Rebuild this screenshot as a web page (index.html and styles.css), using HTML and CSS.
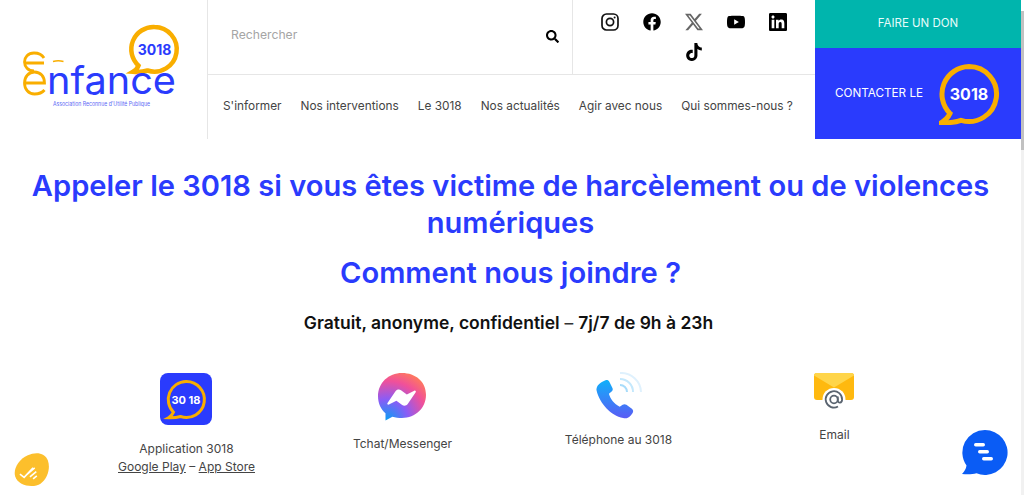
FILE: index.html
```html
<!DOCTYPE html>
<html lang="fr">
<head>
  <title>Appeler le 3018</title>
  <meta charset="UTF-8">
  <link rel="stylesheet" href="styles.css">
</head>
<body>
  <header class="site-header">
    <a class="logo" href="#">
      <svg width="207" height="139" viewBox="0 0 207 139">
        <path d="M154.500 27a22.300 22.300 0 1 1-7 43.500c-4 1.300-9 1.800-14.500 1.300 2.500-1.400 4.500-3.600 5.500-6.100A22.300 22.300 0 0 1 154.500 27z" fill="none" stroke="#f9ae00" stroke-width="4.500"/>
        <text class="logo-num" x="154.500" y="55" text-anchor="middle">3018</text>
        <path d="M44 58c-2-3.500-6-5-10-5-6 0-9.500 4.500-9.500 9S28 71 34 71M24.500 63H44" fill="none" stroke="#f9ae00" stroke-width="2.800"/>
        <path d="M44.500 90c-2.500 3-6 4-10 4-6 0-10-5-10-11s4-11 10-11 10 4.500 10 11H24.500" fill="none" stroke="#f9ae00" stroke-width="2.800"/>
        <path d="M53 61.500c3.500-1 7-1 10.500 0" fill="none" stroke="#f9ae00" stroke-width="1.500"/>
        <text class="logo-word" x="47" y="93.500" textLength="129" lengthAdjust="spacingAndGlyphs">nfance</text>
        <text class="logo-small" x="53" y="105.500" textLength="97" lengthAdjust="spacingAndGlyphs">Association Reconnue d'Utilité Publique</text>
      </svg>
    </a>

    <div class="header-middle">
      <div class="top-row">
        <div class="search">
          <span class="search-label">Rechercher</span>
          <svg class="search-icon" width="13" height="13" viewBox="0 0 512 512"><path d="M505 442.700L405.300 343c-4.500-4.500-10.600-7-17-7H372c27.600-35.300 44-79.700 44-128C416 93.100 322.900 0 208 0S0 93.100 0 208s93.100 208 208 208c48.300 0 92.700-16.400 128-44v16.300c0 6.400 2.500 12.500 7 17l99.700 99.700c9.400 9.400 24.600 9.400 33.900 0l28.300-28.300c9.400-9.400 9.400-24.600.1-34zM208 336c-70.700 0-128-57.200-128-128 0-70.700 57.200-128 128-128 70.700 0 128 57.200 128 128 0 70.700-57.200 128-128 128z"/></svg>
        </div>
        <div class="socials">
          <svg width="18" height="18" viewBox="0 0 18 18"><rect x="1" y="1" width="16" height="16" rx="4.500" fill="none" stroke="#111" stroke-width="1.700"/><circle cx="9" cy="9" r="3.600" fill="none" stroke="#111" stroke-width="1.700"/><circle cx="13.600" cy="4.400" r="1" fill="#111"/></svg>
          <svg width="18" height="18" viewBox="0 0 512 512"><path d="M504 256C504 119 393 8 256 8S8 119 8 256c0 123.780 90.690 226.380 209.250 245V327.690h-63V256h63v-54.640c0-62.150 37-96.480 93.670-96.480 27.140 0 55.520 4.840 55.520 4.840v61h-31.280c-30.800 0-40.410 19.120-40.410 38.730V256h68.780l-11 71.690h-57.780V501C413.310 482.380 504 379.780 504 256z"/></svg>
          <svg width="18" height="18" viewBox="0 0 24 24"><path d="M18.901 1.153h3.680l-8.040 9.190L24 22.846h-7.406l-5.800-7.584-6.638 7.584H.474l8.600-9.830L0 1.154h7.594l5.243 6.932ZM17.610 20.644h2.039L6.486 3.240H4.298Z" fill="#666"/></svg>
          <svg width="18" height="18" viewBox="0 0 24 24"><path d="M23.498 6.186a3.016 3.016 0 0 0-2.122-2.136C19.505 3.545 12 3.545 12 3.545s-7.505 0-9.377.505A3.017 3.017 0 0 0 .502 6.186C0 8.070 0 12 0 12s0 3.930.502 5.814a3.016 3.016 0 0 0 2.122 2.136c1.871.505 9.376.505 9.376.505s7.505 0 9.377-.505a3.015 3.015 0 0 0 2.122-2.136C24 15.930 24 12 24 12s0-3.930-.502-5.814zM9.545 15.568V8.432L15.818 12l-6.273 3.568z"/></svg>
          <svg width="18" height="18" viewBox="0 0 24 24"><path d="M20.447 20.452h-3.554v-5.569c0-1.328-.027-3.037-1.852-3.037-1.853 0-2.136 1.445-2.136 2.939v5.667H9.351V9h3.414v1.561h.046c.477-.9 1.637-1.850 3.370-1.850 3.601 0 4.267 2.370 4.267 5.455v6.286zM5.337 7.433c-1.144 0-2.063-.926-2.063-2.065 0-1.138.92-2.063 2.063-2.063 1.140 0 2.064.925 2.064 2.063 0 1.139-.925 2.065-2.064 2.065zm1.782 13.019H3.555V9h3.564v11.452zM22.225 0H1.771C.792 0 0 .774 0 1.729v20.542C0 23.227.792 24 1.771 24h20.451C23.200 24 24 23.227 24 22.271V1.729C24 .774 23.200 0 22.222 0h.003z"/></svg>
          <svg width="18" height="18" viewBox="0 0 24 24"><path d="M12.525.02c1.310-.02 2.610-.01 3.910-.02.08 1.530.63 3.090 1.750 4.170 1.120 1.110 2.700 1.620 4.240 1.790v4.030c-1.440-.05-2.890-.35-4.200-.97-.57-.26-1.100-.59-1.620-.93-.01 2.920.01 5.840-.02 8.750-.08 1.400-.54 2.790-1.350 3.940-1.310 1.920-3.580 3.170-5.910 3.210-1.430.08-2.860-.31-4.080-1.030-2.020-1.190-3.440-3.370-3.650-5.710-.02-.5-.03-1-.01-1.490.18-1.900 1.120-3.720 2.580-4.960 1.660-1.440 3.980-2.130 6.150-1.720.02 1.480-.04 2.960-.04 4.440-.99-.32-2.150-.23-3.020.37-.63.41-1.110 1.040-1.360 1.750-.21.51-.15 1.070-.14 1.610.24 1.640 1.820 3.020 3.500 2.870 1.120-.01 2.190-.66 2.770-1.610.19-.33.4-.67.41-1.060.1-1.790.06-3.570.07-5.360.01-4.030-.01-8.050.02-12.070z"/></svg>
        </div>
      </div>
      <nav class="main-nav">
        <a href="#">S'informer</a>
        <a href="#">Nos interventions</a>
        <a href="#">Le 3018</a>
        <a href="#">Nos actualités</a>
        <a href="#">Agir avec nous</a>
        <a href="#">Qui sommes-nous ?</a>
      </nav>
    </div>

    <div class="header-cta">
      <a class="cta-don" href="#">FAIRE UN DON</a>
      <a class="cta-contact" href="#">
        <span class="cta-text">CONTACTER LE</span>
        <svg width="62" height="62" viewBox="0 0 62 62">
          <path d="M30 3.500a27.500 27.500 0 1 1-8 53.800c-5 1.800-13 2.700-20 2.500 3.500-2 7-5 9-9.400A27.500 27.500 0 0 1 30 3.500z" fill="none" stroke="#f9ae00" stroke-width="5"/>
          <text class="bubble-num" x="30" y="37" text-anchor="middle">3018</text>
        </svg>
      </a>
    </div>
  </header>

  <main class="content">
    <h1>Appeler le 3018 si vous êtes victime de harcèlement ou de violences numériques</h1>
    <h2>Comment nous joindre ?</h2>
    <p class="hours"><strong>Gratuit, anonyme, confidentiel</strong> – <strong>7j/7 de 9h à 23h</strong></p>

    <div class="channels">
      <div class="channel channel-app">
        <svg width="52" height="52" viewBox="0 0 52 52">
          <rect width="52" height="52" rx="8" fill="#2a3bfd"/>
          <path d="M26 8.500a18 18 0 1 1-5.500 35c-3.500 1-7 1.400-12 1.200 2.300-1.300 4-3.200 5-5.500A18 18 0 0 1 26 8.500z" fill="none" stroke="#f9ae00" stroke-width="3"/>
          <text class="app-num" x="26" y="30.500" text-anchor="middle">30 18</text>
        </svg>
        <p class="channel-label">Application 3018<br><a href="#">Google Play</a> – <a href="#">App Store</a></p>
      </div>
      <div class="channel channel-messenger">
        <svg width="50" height="50" viewBox="0 0 50 50">
          <defs>
            <radialGradient id="msg" cx="0.190" cy="0.990" r="1.100">
              <stop offset="0" stop-color="#0a9df5"/>
              <stop offset="0.400" stop-color="#8a5cf6"/>
              <stop offset="0.750" stop-color="#f0509a"/>
              <stop offset="1" stop-color="#ff7a5c"/>
            </radialGradient>
          </defs>
          <path d="M25 1C11.500 1 1 10.900 1 24.200c0 7 2.900 13 7.500 17.100v7.200l6.900-3.800c3 .8 6.200 1.300 9.600 1.300 13.500 0 24-9.900 24-23.200S38.500 1 25 1z" fill="url(#msg)"/>
          <path d="M10.500 31l8-11.800c1.200-1.800 3.700-2.300 5.500-1l5.800 4.400 7.500-3.900c1-.5 2 .6 1.400 1.600l-8 11.800c-1.200 1.800-3.700 2.300-5.500 1l-5.800-4.400-7.500 3.900c-1 .5-2-.6-1.400-1.600z" fill="#fff"/>
        </svg>
        <p class="channel-label">Tchat/Messenger</p>
      </div>
      <div class="channel channel-phone">
        <svg width="50" height="50" viewBox="0 0 50 50">
          <defs>
            <linearGradient id="tel" x1="0" y1="0" x2="0" y2="1">
              <stop offset="0" stop-color="#10b0fa"/>
              <stop offset="1" stop-color="#5a5cf5"/>
            </linearGradient>
          </defs>
          <path transform="translate(-1 2.500) scale(1.040)" d="M9 7l3-1.500c1.500-.7 3 0 3.700 1.400l3 6c.6 1.300.3 2.600-.8 3.500l-2.600 2.200c1.500 5.400 5 9.700 10.400 12.500l2.800-2c1.100-.8 2.500-.8 3.600 0l5.300 3.800c1.300 1 1.600 2.700.7 4l-1.600 2.200c-1.700 2.400-4.600 3.500-7.500 2.800C17 39.500 6.500 28 3.500 15.700 2.700 12.300 5.500 8.700 9 7z" fill="url(#tel)"/>
          <g fill="none" stroke-width="2">
            <path d="M26 13a7 7 0 0 1 7 7" stroke="#a8dcfa"/>
            <path d="M26 7a13 13 0 0 1 13 13" stroke="#c4e8fc"/>
            <path d="M26 1a20 19.500 0 0 1 21 19" stroke="#dff1fd"/>
          </g>
        </svg>
        <p class="channel-label">Téléphone au 3018</p>
      </div>
      <div class="channel channel-mail">
        <svg width="42" height="40" viewBox="0 0 42 40">
          <rect x="1" y="1" width="40" height="27" rx="3" fill="#ffb90f"/>
          <path d="M1 3.500c0-1.500 1-2.500 2.500-2.500h35c1.500 0 2.500 1 2.500 2.500L21 15.500z" fill="#ffd54a"/>
          <path d="M10 28l11-10.500L32 28z" fill="#ffa50f"/>
          <circle cx="21" cy="27.500" r="11.500" fill="#fff"/>
          <circle cx="21" cy="27.500" r="3.800" fill="none" stroke="#5a6470" stroke-width="1.800"/>
          <path d="M24.800 24.500v4c0 3 4.300 3 4.300-1A8.200 8.200 0 1 0 25 34.500" fill="none" stroke="#5a6470" stroke-width="1.800"/>
        </svg>
        <p class="channel-label">Email</p>
      </div>
    </div>
  </main>

  <button class="fab-consent" aria-label="Cookies">
    <svg width="38" height="36" viewBox="0 0 36 34">
      <path d="M3 23C1 16 6 7 15 3c7-3 16-3 19 5 2.500 7 0 17-7 22-6 4-21 3-24-7z" fill="#fcbf2c"/>
      <path d="M7.500 21l4 3 8.500-9M14 21.500l7.500-6.500M17 23.500l6-5M20 25.500l3.500-3" fill="none" stroke="#fff" stroke-width="1.500"/>
    </svg>
  </button>
  <button class="fab-chat" aria-label="Chat">
    <svg width="48" height="46" viewBox="0 0 48 46">
      <path d="M25 1a22.500 22.500 0 1 1-8.500 43.300c-4 1-9 1.500-14.500.6 2.500-2.500 4-5 4.500-8.400A22.500 22.500 0 0 1 25 1z" fill="#0a5cf5"/>
      <g fill="#fff">
        <rect x="14" y="14" width="11" height="3.400" rx="1.700"/>
        <rect x="18" y="21" width="11" height="3.400" rx="1.700"/>
        <rect x="22" y="28" width="11" height="3.400" rx="1.700"/>
      </g>
    </svg>
  </button>
  <div class="scroll-track"><div class="scroll-thumb"></div></div>
</body>
</html>
```

FILE: styles.css
```css
html, body {
  margin: 0;
  padding: 0;
}

body {
  font-family: 'Inter', 'Liberation Sans', sans-serif;
  background: #fff;
  color: #111;
  height: 495px;
  overflow: hidden;
}

a {
  color: inherit;
  text-decoration: none;
}

.site-header {
  display: flex;
  height: 139px;
  margin-right: 3px;
}

.logo {
  flex: 0 0 207px;
  border-right: 1px solid #e6e6e6;
}

.logo svg {
  display: block;
}

.logo-num {
  font: 700 14px 'Inter', sans-serif;
  fill: #2a3bfd;
}

.logo-word {
  font: 400 38px 'Inter', sans-serif;
  fill: #2a3bfd;
}

.logo-small {
  font: 400 5.500px 'Inter', sans-serif;
  fill: #5a68f5;
}

.header-middle {
  flex: 1;
  min-width: 0;
  display: flex;
  flex-direction: column;
}

.top-row {
  display: flex;
  height: 74px;
  border-bottom: 1px solid #e6e6e6;
}

.search {
  flex: 1;
  display: flex;
  justify-content: space-between;
  padding: 27px 13px 0 23px;
  border-right: 1px solid #e6e6e6;
}

.search-label {
  font-size: 12.200px;
  color: #a5a5a5;
}

.search-icon {
  margin-top: 3px;
}

.socials {
  flex: 0 0 242px;
  display: flex;
  flex-wrap: wrap;
  justify-content: center;
  gap: 12px 24px;
  padding: 13px 16px 0;
  box-sizing: border-box;
  align-content: flex-start;
}

.main-nav {
  display: flex;
  gap: 19px;
  padding: 24px 0 0 15px;
  font-size: 11.850px;
  color: #444;
  white-space: nowrap;
}

.header-cta {
  flex: 0 0 206px;
  display: flex;
  flex-direction: column;
  color: #fff;
  font-size: 11.700px;
}

.cta-don {
  flex: 0 0 46px;
  padding-bottom: 2px;
  display: flex;
  align-items: center;
  justify-content: center;
  background: #00b5ad;
  color: #e6fbfa;
  font-size: 11.500px;
}

.cta-contact {
  flex: 1;
  display: flex;
  align-items: center;
  gap: 16px;
  padding-left: 20px;
  background: #2a3bfd;
}

.cta-text {
  padding-bottom: 2px;
}

.bubble-num {
  font: 700 16px 'Inter', sans-serif;
  fill: #fff;
}

.app-num {
  font: 700 11px 'Inter', sans-serif;
  fill: #fff;
}

.content {
  text-align: center;
  margin-right: 3px;
  padding: 28px 20px 0;
}

h1 {
  margin: 0;
  font-size: 29.100px;
  line-height: 37px;
  font-weight: 600;
  color: #2a3bfd;
}

h2 {
  margin: 13px 0 0;
  font-size: 29.100px;
  line-height: 37px;
  font-weight: 600;
  color: #2a3bfd;
}

.hours {
  margin: 20px 0 0;
  padding-right: 4px;
  font-size: 17.500px;
  line-height: 24px;
  color: #333;
}

.hours strong {
  font-weight: 600;
  color: #111;
}

.channels {
  display: grid;
  grid-template-columns: repeat(4, 216px);
  justify-content: center;
  margin-top: 38px;
}

.channel {
  display: flex;
  flex-direction: column;
  align-items: center;
}

.channel-label {
  margin: 14px 0 0;
  font-size: 12px;
  line-height: 18px;
  color: #444;
}

.channel-app svg {
  margin-right: 2px;
}

.channel-app .channel-label {
  margin-top: 15px;
}

.channel-messenger svg {
  margin: -1px 2px 0 0;
}

.channel-messenger .channel-label {
  margin-top: 13px;
}

.channel-phone svg {
  margin-top: -1px;
}

.channel-phone .channel-label {
  margin-top: 9px;
}

.channel-mail svg {
  margin: -1px 2px 0 0;
}

.channel-label a {
  text-decoration: underline;
}

.fab-consent,
.fab-chat {
  position: fixed;
  padding: 0;
  border: none;
  background: none;
}

.fab-consent svg,
.fab-chat svg {
  display: block;
}

.fab-consent {
  left: 12px;
  bottom: 7px;
}

.fab-chat {
  left: 960px;
  bottom: 20px;
}

.scroll-track {
  position: fixed;
  top: 11px;
  right: 0;
  bottom: 0;
  width: 3px;
  background: #f1f1f1;
}

.scroll-thumb {
  height: 139px;
  background: #c1c1c1;
}
```
